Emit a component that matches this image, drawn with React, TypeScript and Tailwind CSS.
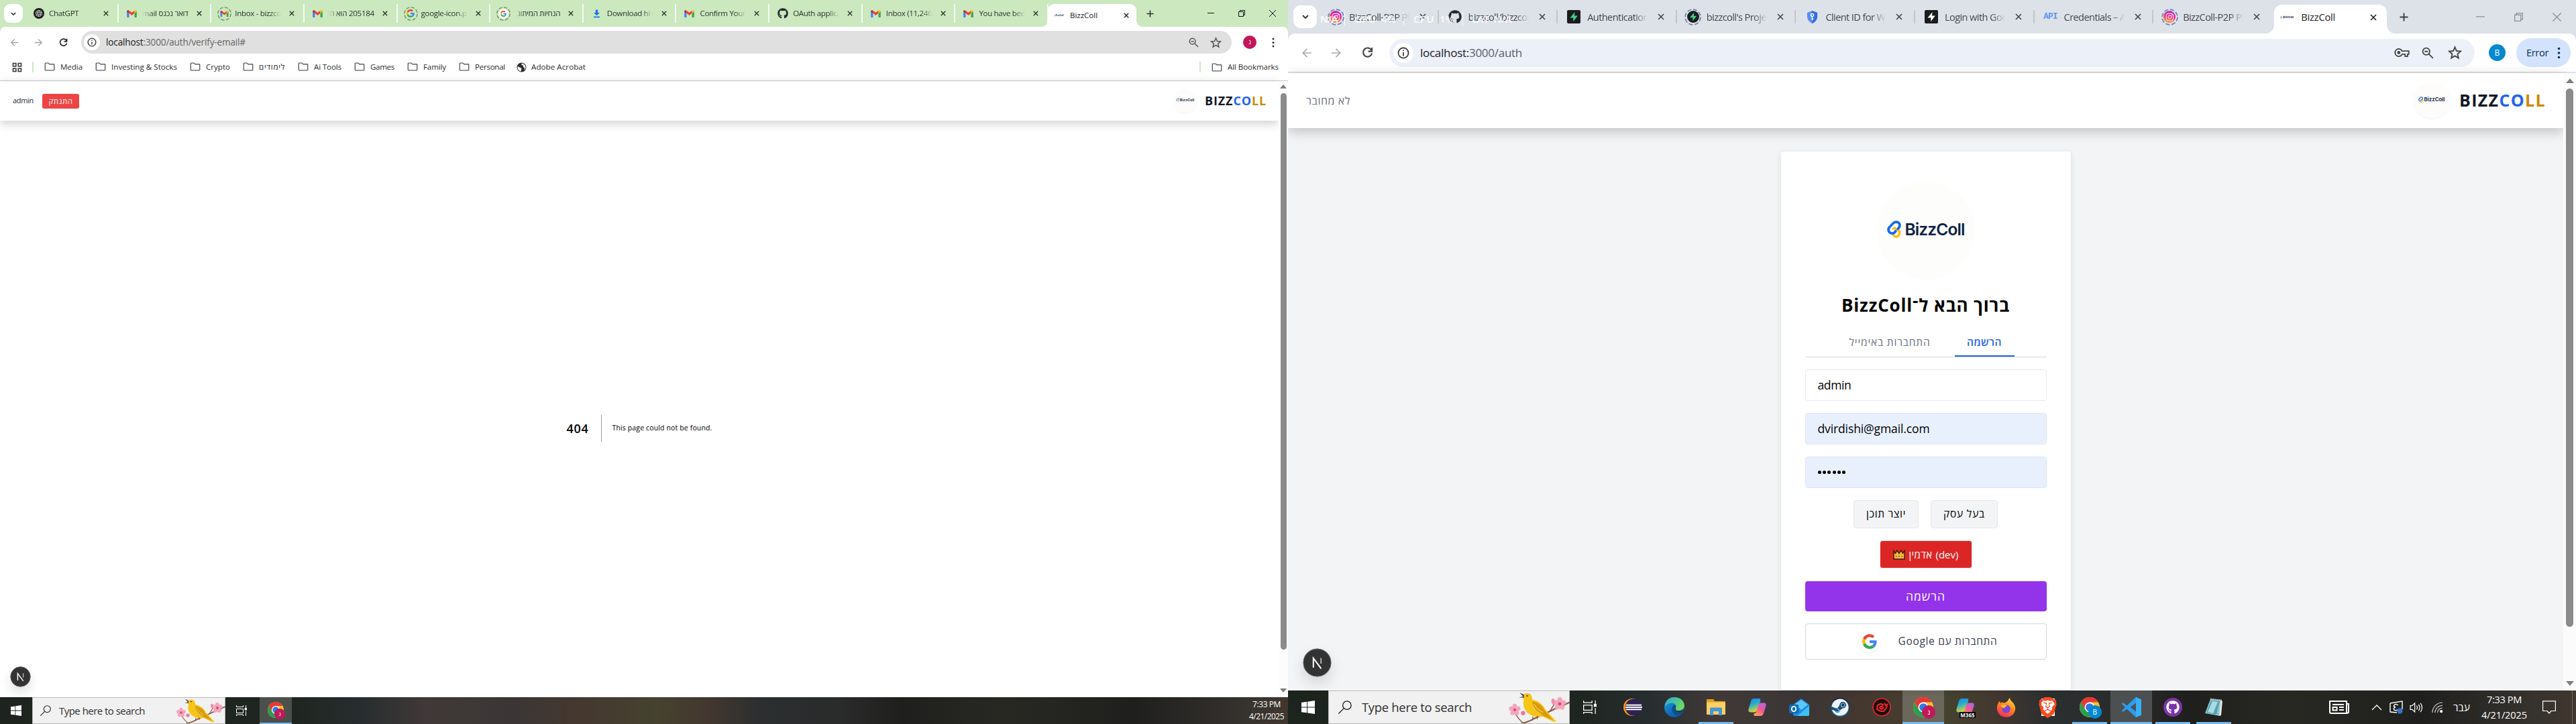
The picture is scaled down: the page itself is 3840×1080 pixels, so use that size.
import React, { useLayoutEffect, useRef, useState } from "react";
import { RiOpenaiFill } from "react-icons/ri";
import { FaGithub, FaSteam, FaInstagram } from "react-icons/fa";
import { SiBrave } from "react-icons/si";

/* Text whose letter spacing is adjusted so that it occupies exactly `w` pixels. */
function Fit({ w, children, className = "" }: { w: number; children: React.ReactNode; className?: string }) {
  const ref = useRef<HTMLSpanElement>(null);
  const [ls, setLs] = useState(0);
  useLayoutEffect(() => {
    const el = ref.current;
    if (!el) return;
    el.style.letterSpacing = "0px";
    const n = (el.textContent || "").length || 1;
    const v = (w - el.getBoundingClientRect().width) / n;
    el.style.letterSpacing = v + "px";
    setLs(v);
  }, [w]);
  return (
    <span ref={ref} className={"inline-block whitespace-nowrap " + className} style={{ letterSpacing: ls + "px" }}>
      {children}
    </span>
  );
}

/* ---------- small icons ---------- */
type P = { className?: string };

const X = ({ className = "" }: P) => (
  <svg viewBox="0 0 10 10" className={className} fill="none" stroke="currentColor" strokeWidth="1.7">
    <path d="M1 1L9 9M9 1L1 9" />
  </svg>
);
const Plus = ({ className = "" }: P) => (
  <svg viewBox="0 0 12 12" className={className} fill="none" stroke="currentColor" strokeWidth="1.7">
    <path d="M6 0.5V11.5M0.5 6H11.5" />
  </svg>
);
const Back = ({ className = "" }: P) => (
  <svg viewBox="0 0 16 16" className={className} fill="none" stroke="currentColor" strokeWidth="1.7">
    <path d="M15 8H2.5M8.5 1.8L2.3 8L8.5 14.2" />
  </svg>
);
const Reload = ({ className = "" }: P) => (
  <svg viewBox="0 0 16 16" className={className} fill="none" stroke="currentColor" strokeWidth="2">
    <path d="M13.6 4.6A6.2 6.2 0 1 0 14.2 9" />
    <path d="M14.2 1V6.2H9" />
  </svg>
);
const Info = ({ className = "" }: P) => (
  <svg viewBox="0 0 16 16" className={className} fill="none" stroke="currentColor" strokeWidth="1.5">
    <circle cx="8" cy="8" r="6.7" />
    <path d="M8 7V12M8 4V5.6" />
  </svg>
);
const ZoomOut = ({ className = "" }: P) => (
  <svg viewBox="0 0 16 16" className={className} fill="none" stroke="currentColor" strokeWidth="1.6">
    <circle cx="6" cy="6" r="4.6" />
    <path d="M9.4 9.4L15 15M3.8 6H8.2" />
  </svg>
);
const Star = ({ className = "" }: P) => (
  <svg viewBox="0 0 18 18" className={className} fill="none" stroke="currentColor" strokeWidth="1.6">
    <path d="M9 2L11.1 6.9L16.4 7.3L12.4 10.8L13.6 16L9 13.2L4.4 16L5.6 10.8L1.6 7.3L6.9 6.9Z" />
  </svg>
);
const Key = ({ className = "" }: P) => (
  <svg viewBox="0 0 24 14" className={className} fill="none" stroke="currentColor" strokeWidth="2">
    <path d="M12.4 4.5H23V9.5H21V13H17V9.5H12.4A6 6 0 1 1 12.4 4.5Z" />
    <circle cx="7" cy="7" r="1.6" fill="currentColor" />
  </svg>
);
const Dots = ({ className = "" }: P) => (
  <svg viewBox="0 0 4 16" className={className} fill="currentColor">
    <circle cx="2" cy="2.2" r="1.6" />
    <circle cx="2" cy="8" r="1.6" />
    <circle cx="2" cy="13.8" r="1.6" />
  </svg>
);
const Chevron = ({ className = "" }: P) => (
  <svg viewBox="0 0 10 6" className={className} fill="none" stroke="currentColor" strokeWidth="1.8">
    <path d="M1 1L5 5L9 1" />
  </svg>
);
const Folder = ({ className = "" }: P) => (
  <svg viewBox="0 0 16 14" className={className} fill="none" stroke="#5b5e61" strokeWidth="1.5">
    <path d="M1.6 1.2H6L7.8 3H14.4Q15.2 3 15.2 3.8V12Q15.2 12.8 14.4 12.8H1.6Q0.8 12.8 0.8 12V2Q0.8 1.2 1.6 1.2Z" />
  </svg>
);
const Apps = ({ className = "" }: P) => (
  <svg viewBox="0 0 16 16" className={className} fill="none" stroke="#3c4043" strokeWidth="1.8">
    <rect x="1.6" y="1.6" width="4.6" height="4.6" />
    <rect x="9.8" y="1.6" width="4.6" height="4.6" />
    <rect x="1.6" y="9.8" width="4.6" height="4.6" />
    <rect x="9.8" y="9.8" width="4.6" height="4.6" />
  </svg>
);
const Globe = ({ className = "" }: P) => (
  <svg viewBox="0 0 16 16" className={className}>
    <circle cx="8" cy="8" r="7.4" fill="#2b2e31" />
    <path d="M2 6Q4 8 6.5 8.4L8 10.5L6.8 14.5Q3 13.5 1.8 9.5ZM8.5 1.6Q7 3.5 8.6 4.4L11 5L10.5 7.5L13 9L12 12.6Q15 10 14.4 6.4L12 2.8Z" fill="#fff" />
  </svg>
);
const Gmail = ({ className = "" }: P) => (
  <svg viewBox="0 0 16 12" className={className}>
    <path d="M0 1.5V11Q0 12 1 12H3.6V4Z" fill="#4285f4" />
    <path d="M16 1.5V11Q16 12 15 12H12.4V4Z" fill="#34a853" />
    <path d="M3.6 0.8L8 4.2L12.4 0.8V5.2L8 8.6L3.6 5.2Z" fill="#ea4335" />
    <path d="M0 1.8Q0.6 -0.6 3.6 0.8V5.4L0 2.8Z" fill="#c5221f" />
    <path d="M16 1.8Q15.4 -0.6 12.4 0.8V5.4L16 2.8Z" fill="#fbbc04" />
  </svg>
);
const GoogleG = ({ className = "" }: P) => (
  <svg viewBox="0 0 48 48" className={className}>
    <path fill="#EA4335" d="M24 9.5c3.54 0 6.71 1.22 9.21 3.6l6.85-6.85C35.9 2.38 30.47 0 24 0 14.62 0 6.51 5.38 2.56 13.22l7.98 6.19C12.43 13.72 17.74 9.5 24 9.5z" />
    <path fill="#4285F4" d="M46.98 24.55c0-1.57-.15-3.09-.38-4.55H24v9.02h12.94c-.58 2.96-2.26 5.48-4.78 7.18l7.73 6c4.51-4.18 7.09-10.36 7.09-17.65z" />
    <path fill="#FBBC05" d="M10.53 28.59c-.48-1.45-.76-2.99-.76-4.59s.27-3.14.76-4.59l-7.98-6.19C.92 16.46 0 20.12 0 24c0 3.88.92 7.54 2.56 10.78l7.97-6.19z" />
    <path fill="#34A853" d="M24 48c6.48 0 11.93-2.13 15.89-5.81l-7.73-6c-2.15 1.45-4.92 2.3-8.16 2.3-6.26 0-11.57-4.22-13.47-9.91l-7.98 6.19C6.51 42.62 14.62 48 24 48z" />
  </svg>
);
const Download = ({ className = "" }: P) => (
  <svg viewBox="0 0 12 16" className={className}>
    <path d="M4 0.5H8V6H11.5L6 11.5L0.5 6H4ZM0.5 13H11.5V15H0.5Z" fill="#1a73e8" />
  </svg>
);
const BoltShape = ({ color }: { color: string }) => (
  <path d="M11.5 3L4.5 11.5H9.3V17L15.8 8.5H11Z" fill={color} />
);
const BoltSquare = ({ className = "", color }: P & { color: string }) => (
  <svg viewBox="0 0 20 20" className={className}>
    <rect width="20" height="20" rx="2" fill="#1c1c1c" />
    <BoltShape color={color} />
  </svg>
);
const BoltCircle = ({ className = "" }: P) => (
  <svg viewBox="0 0 20 20" className={className}>
    <circle cx="10" cy="10" r="10" fill="#1c1c1c" />
    <BoltShape color="#3ecf8e" />
  </svg>
);
const Shield = ({ className = "" }: P) => (
  <svg viewBox="0 0 18 20" className={className}>
    <path d="M9 0L17 3V10Q16 17 9 20Q2 17 1 10V3Z" fill="#5b8def" />
    <path d="M9 0L17 3V10Q16 17 9 20Z" fill="#2f6fe0" />
    <circle cx="9" cy="6.8" r="2.2" fill="none" stroke="#fff" strokeWidth="1.5" />
    <path d="M9 9V15M9 13H11" stroke="#fff" strokeWidth="1.6" />
  </svg>
);
const Insta = ({ className = "" }: P) => (
  <span className={"flex items-center justify-center rounded-full bg-[linear-gradient(200deg,#a52bd6_5%,#f5278a_45%,#ff9a2e_90%)] text-white " + className}>
    <FaInstagram className="h-[13px] w-[13px]" />
  </span>
);
const Ring = ({ children, className = "", color }: { children: React.ReactNode; className?: string; color: string }) => (
  <span className={"relative flex items-center justify-center " + className}>
    <svg viewBox="0 0 24 24" className="absolute inset-0 h-full w-full" fill="none" stroke={color} strokeWidth="1.6">
      <circle cx="12" cy="12" r="11" strokeDasharray="6 2.64" />
    </svg>
    {children}
  </span>
);
const LinkMark = ({ className = "" }: P) => (
  <svg viewBox="0 0 62 78" className={className} fill="none" strokeLinecap="round" strokeWidth="11">
    <path d="M28 36C33 32 40 34 40 41C53 41 58 50 54 61C49 74 36 76 28 65" stroke="#fcc21b" />
    <path d="M38 47C33 58 18 62 9 51C3 42 6 34 11 29L27 12C38 2 54 6 56 19C57 27 53 33 48 37" stroke="#1268f5" />
  </svg>
);

const LogoTiny = ({ className = "", mark, text }: { className?: string; mark: string; text: string }) => (
  <span className={"flex items-center justify-center gap-px rounded-full bg-[#fdfcfb] " + className}>
    <LinkMark className={mark} />
    <span className={"font-bold text-[#1b2f4e] font-[Inter] " + text}>BizzColl</span>
  </span>
);

const NextBadge = ({ className = "" }: P) => (
  <svg viewBox="0 0 40 40" className={"absolute " + className}>
    <circle cx="20" cy="20" r="19.2" fill="#333" stroke="#6b6b6b" strokeWidth="1" />
    <path d="M14.7 27V13.7L25.5 28.2" fill="none" stroke="#fff" strokeWidth="1.9" />
    <path d="M25.3 13.5V21.5" stroke="#bbb" strokeWidth="1.7" />
  </svg>
);

/* ---------- tabs ---------- */
type TabInfo = { icon: React.ReactNode; label: string; rtl?: boolean };

const ringL = "h-[21px] w-[21px]";
const green = "#6f8a66";
const leftTabs: TabInfo[] = [
  { icon: <span className="flex h-4 w-4 items-center justify-center rounded-full bg-[#1f1f1f] text-white"><RiOpenaiFill className="h-3 w-3" /></span>, label: "ChatGPT" },
  { icon: <Gmail className="h-[11px] w-[15px]" />, label: "דואר נכנס Gmail", rtl: true },
  { icon: <Ring color={green} className={ringL}><Gmail className="h-[9px] w-[13px]" /></Ring>, label: "Inbox - bizzcoll" },
  { icon: <Gmail className="h-[11px] w-[15px]" />, label: "205184 הוא הקוד", rtl: true },
  { icon: <Ring color={green} className={ringL}><GoogleG className="h-[12px] w-[12px]" /></Ring>, label: "google-icon.png" },
  { icon: <Ring color={green} className={ringL}><span className="flex h-[15px] w-[15px] items-center justify-center rounded-full bg-white/80"><GoogleG className="h-[9px] w-[9px]" /></span></Ring>, label: "הנחיות המיתוג", rtl: true },
  { icon: <Download className="h-[13px] w-[11px]" />, label: "Download hi res" },
  { icon: <Gmail className="h-[11px] w-[15px]" />, label: "Confirm Your Si" },
  { icon: <FaGithub className="h-[16px] w-[16px] text-[#24292f]" />, label: "OAuth application" },
  { icon: <Gmail className="h-[11px] w-[15px]" />, label: "Inbox (11,246)" },
  { icon: <Gmail className="h-[11px] w-[15px]" />, label: "You have been" },
];

const ringR = "h-[25px] w-[25px]";
const blue = "#6580ad";
const rightTabs: TabInfo[] = [
  { icon: <Ring color={blue} className={ringR}><Insta className="h-[18px] w-[18px]" /></Ring>, label: "BizzColl-P2P Pl" },
  { icon: <FaGithub className="h-5 w-5 text-[#24292f]" />, label: "bizzcoll/bizzcoll" },
  { icon: <BoltSquare className="h-5 w-5" color="#3ecf8e" />, label: "Authentication" },
  { icon: <Ring color={blue} className={ringR}><BoltCircle className="h-[18px] w-[18px]" /></Ring>, label: "bizzcoll's Project" },
  { icon: <Shield className="h-[19px] w-[17px]" />, label: "Client ID for Web" },
  { icon: <BoltSquare className="h-5 w-5" color="#fff" />, label: "Login with Goog" },
  { icon: <span className="font-['Liberation_Mono'] text-[12.5px] font-bold tracking-[-0.6px] text-[#5f94f5]">API</span>, label: "Credentials – A" },
  { icon: <Ring color={blue} className={ringR}><Insta className="h-[18px] w-[18px]" /></Ring>, label: "BizzColl-P2P Pl" },
];

function LeftTab({ t }: { t: TabInfo }) {
  return (
    <div className="flex h-7 w-[138.65px] shrink-0 items-center border-r-2 border-white/80 text-[#2c332a]">
      <span className="flex w-[35px] shrink-0 items-center justify-center pl-1">{t.icon}</span>
      {t.rtl ? (
        <span dir="rtl" className="h-5 w-[69px] overflow-hidden text-[11.6px] leading-5 tracking-[-0.3px] whitespace-nowrap [mask-image:linear-gradient(to_left,black_76%,transparent)]">{t.label}</span>
      ) : (
        <span className="h-5 w-[69px] overflow-hidden text-[11.6px] leading-5 tracking-[-0.35px] whitespace-nowrap [mask-image:linear-gradient(to_right,black_76%,transparent)]">{t.label}</span>
      )}
      <X className="ml-[12px] h-[8px] w-[8px]" />
    </div>
  );
}

function RightTab({ t }: { t: TabInfo }) {
  return (
    <div className="flex h-[36px] w-[177.6px] shrink-0 items-center text-[#44484c]">
      <span className="flex w-[44px] shrink-0 items-center justify-center pl-1">{t.icon}</span>
      <span className="h-6 w-[90px] overflow-hidden text-[14.6px] leading-6 tracking-[-0.6px] whitespace-nowrap [mask-image:linear-gradient(to_right,black_78%,transparent)]">{t.label}</span>
      <X className="ml-[15px] h-[10px] w-[10px]" />
      <span className="ml-auto h-5 w-[2px] bg-[#c3c6c9]" />
    </div>
  );
}

const WinBtns = ({ size, cell, first }: { size: string; cell: string; first: string }) => (
  <>
    <span className={"flex justify-center " + first}>
      <svg viewBox="0 0 10 10" className={size} stroke="currentColor" fill="none"><path d="M0 4.5H10" /></svg>
    </span>
    <span className={"flex justify-center " + cell}>
      <svg viewBox="0 0 10 10" className={size} stroke="currentColor" fill="none"><path d="M0.5 2.5H7.5V9.5H0.5ZM2.5 2.5V0.5H9.5V7.5H7.5" /></svg>
    </span>
    <span className={"flex justify-center " + cell}>
      <svg viewBox="0 0 10 10" className={size} stroke="currentColor" fill="none"><path d="M0 0L10 10M10 0L0 10" /></svg>
    </span>
  </>
);

const Feet = ({ left, right }: { left: string; right: string }) => (
  <>
    <span className={"absolute bottom-0 " + left} />
    <span className={"absolute bottom-0 " + right} />
  </>
);

const Brand = ({ w, className }: { w: number; className: string }) => (
  <Fit w={w} className={"font-bold " + className}>
    <span className="text-[#111827]">BIZZ</span>
    <span className="text-[#2563eb]">CO</span>
    <span className="text-[#ca8a04]">LL</span>
  </Fit>
);

const bookmarks: [string, number][] = [
  ["Media", 33], ["Investing & Stocks", 98], ["Crypto", 36], ["לימודים", 39], ["Ai Tools", 41], ["Games", 36], ["Family", 34], ["Personal", 45],
];

/* ---------- left monitor ---------- */
function LeftScreen() {
  return (
    <div className="flex h-[1080px] w-[1920px] shrink-0 flex-col overflow-hidden bg-white">
      <div className="flex h-10 shrink-0 items-center bg-[#cbe8bf] pl-[6px]">
        <span className="flex h-7 w-7 items-center justify-center rounded-[9px] bg-white">
          <Chevron className="h-[5px] w-[8px] text-[#222]" />
        </span>
        <div className="ml-[4px] flex">
          {leftTabs.map((t, i) => <LeftTab key={i} t={t} />)}
        </div>
        <div className="relative -ml-[1px] mt-[6px] flex h-[34px] w-[132px] items-center rounded-t-[9px] bg-white pl-[8px]">
          <Feet left="-left-[9px] h-[9px] w-[9px] bg-[radial-gradient(circle_at_0_0,transparent_8.5px,white_9px)]" right="-right-[9px] h-[9px] w-[9px] bg-[radial-gradient(circle_at_100%_0,transparent_8.5px,white_9px)]" />
          <LogoTiny className="h-4 w-4" mark="h-[3px] w-[2px]" text="text-[3px]" />
          <span className="ml-[9px] w-[76px] text-[11.6px] leading-5 text-[#222]"><Fit w={41}>BizzColl</Fit></span>
          <X className="ml-[4px] h-[8px] w-[8px] text-[#222]" />
        </div>
        <Plus className="ml-[15px] h-[11px] w-[11px] text-[#2c332a]" />
        <div className="ml-auto flex items-center text-[#111]">
          <WinBtns size="h-[10px] w-[10px]" first="w-[46px]" cell="w-[46px]" />
        </div>
      </div>
      <div className="shrink-0 bg-[#cbe8bf]">
        <div className="flex h-10 items-center rounded-t-lg bg-white [&>*]:mt-[6px]">
          <Back className="ml-[15px] h-[13px] w-[13px] text-[#a5a8a5]" />
          <Back className="ml-[23px] h-[13px] w-[13px] rotate-180 text-[#a5a8a5]" />
          <Reload className="ml-[24px] h-[13px] w-[13px] text-[#222]" />
          <div className="ml-[20px] flex h-[34px] w-[1715px] items-center rounded-full bg-[#e0e0e0]">
            <span className="ml-[4px] flex h-6 w-6 items-center justify-center rounded-full bg-white"><Info className="h-[14px] w-[14px] text-[#333]" /></span>
            <Fit w={208} className="ml-[9px] text-[13.6px] text-[#666]"><span className="text-[#1a1a1a]">localhost</span>:3000/auth/verify-email#</Fit>
            <ZoomOut className="mr-[17px] ml-auto h-[15px] w-[15px] text-[#555]" />
            <Star className="mr-[15px] h-[17px] w-[17px] text-[#555]" />
          </div>
          <span className="ml-[17px] flex h-5 w-5 items-center justify-center rounded-full bg-[#c2185b] text-[9px] text-white">נ</span>
          <Dots className="ml-[23px] h-[15px] w-[4px] text-[#333]" />
        </div>
      </div>
      <div className="flex h-[41px] shrink-0 items-center border-b border-[#c9c9c9] text-[11.6px] text-[#2b2b2b]">
        <Apps className="ml-[18px] h-[15px] w-[15px]" />
        <span className="ml-[15px] h-4 w-[2px] bg-[#cbe8bf]" />
        <div className="ml-[16px] flex">
          {bookmarks.map(([b, w]) => (
            <span key={b} className="mr-[19px] flex items-center">
              <Folder className="mr-[8px] h-[13px] w-[16px]" />
              <Fit w={w}>{b}</Fit>
            </span>
          ))}
        </div>
        <Globe className="-ml-[2px] h-[15px] w-[15px]" />
        <Fit w={81} className="ml-[7px]">Adobe Acrobat</Fit>
        <span className="ml-auto h-4 w-[2px] bg-[#cbe8bf]" />
        <Folder className="mr-[8px] ml-[16px] h-[13px] w-[16px]" />
        <Fit w={76} className="mr-[14px]">All Bookmarks</Fit>
      </div>
      <div className="relative flex min-h-0 flex-1 bg-white">
        <div className="flex flex-1 flex-col">
          <div className="flex h-[59px] shrink-0 items-center bg-white shadow-[0_4px_14px_rgba(0,0,0,0.2)]">
            <Fit w={31} className="ml-[19px] text-[11px] font-medium text-[#1f2937]">admin</Fit>
            <span className="ml-[13px] flex h-[22px] w-[55px] items-center justify-center rounded-[3px] bg-[#ef4444] text-[11.5px] text-white"><Fit w={36}>התנתק</Fit></span>
            <LogoTiny className="ml-auto h-[37px] w-[37px] pb-[3px] shadow-[0_1px_1px_rgba(0,0,0,0.05)]" mark="h-[6px] w-[5px]" text="text-[5.4px]" />
            <Brand w={92} className="mr-[18px] ml-[11px] text-[18px]" />
          </div>
          <div className="flex flex-1 items-center justify-center pt-[58px]">
            <Fit w={33} className="text-[18px] font-semibold text-black">404</Fit>
            <span className="mr-[16px] ml-[18px] h-10 w-px bg-[#999]" />
            <Fit w={149} className="text-[10.5px] text-black">This page could not be found.</Fit>
          </div>
        </div>
        <div className="flex w-[14px] flex-col items-center bg-[#fcfcfc]">
          <span className="mt-[5px] border-x-[5px] border-b-[6px] border-x-transparent border-b-[#7d7d7d]" />
          <span className="mt-[7px] h-[830px] w-[9px] rounded-full bg-[#8b8b8b]" />
          <span className="mt-auto mb-[7px] border-x-[5px] border-t-[6px] border-x-transparent border-t-[#7d7d7d]" />
        </div>
        <NextBadge className="bottom-[15px] left-[15px] h-[31px] w-[31px] rounded-full shadow-[0_8px_16px_rgba(0,0,0,0.12)]" />
      </div>
      <div className={"flex h-10 shrink-0 items-center " + wallpaper}>
        <span className="flex w-12 justify-center"><WinLogo className="h-4 w-4" /></span>
        <div className="flex h-10 w-72 items-center border border-[#b9b9b9] bg-[#f1f1f1]">
          <Search className="ml-[11px] h-4 w-4" />
          <Fit w={128} className="ml-[12px] text-[15px] text-[#303030]">Type here to search</Fit>
          <Bird className="-mr-px ml-auto h-[38px] w-[74px]" />
        </div>
        <span className="flex w-[51px] pl-4"><TaskView className="h-4 w-4" /></span>
        <span className="flex h-10 w-12 items-center justify-center border-b-2 border-[#76b9ed] bg-[#4b504b]">
          <span className="relative">
            <Chrome className="h-6 w-6" />
            <span className="absolute -right-[2px] -bottom-[2px] flex h-4 w-4 items-center justify-center rounded-full bg-[#c2185b] text-[8px] text-white">נ</span>
          </span>
        </span>
        <div className="mr-[6px] ml-auto flex w-[52px] flex-col items-center text-[12px] leading-[18px] text-white">
          <Fit w={42}>7:33 PM</Fit>
          <Fit w={52}>4/21/2025</Fit>
        </div>
      </div>
    </div>
  );
}

/* ---------- taskbar drawings ---------- */
const wallpaper =
  "bg-[linear-gradient(90deg,#1d231d_0%,#1f2621_23%,#272d2e_28%,#403938_33%,#3b3635_40%,#45382f_45%,#45422f_51%,#43372f_55%,#2b2f30_59%,#2a2b2b_65%,#1f1f1d_70%,#282823_78%,#1f1f1d_88%,#34312d_96%,#40372f_100%)]";

const WinLogo = ({ className = "" }: P) => (
  <svg viewBox="0 0 16 16" className={className} fill="#fff">
    <path d="M0 2.3L6.5 1.4V7.6H0ZM7.3 1.3L16 0V7.6H7.3ZM0 8.4H6.5V14.6L0 13.7ZM7.3 8.4H16V16L7.3 14.7Z" />
  </svg>
);
const Search = ({ className = "" }: P) => (
  <svg viewBox="0 0 16 16" className={className} fill="none" stroke="#222" strokeWidth="1.1">
    <circle cx="10.3" cy="5.7" r="5" />
    <path d="M6.6 9.3L0.3 15.7" />
  </svg>
);
const TaskView = ({ className = "" }: P) => (
  <svg viewBox="0 0 16 16" className={className} fill="none" stroke="#fff" strokeWidth="1">
    <path d="M0.5 0V2.5H10.5V0M0.5 5.5H10.5V11.5H0.5ZM0.5 16V14H10.5V16M14.5 0V4M14.5 9V16" />
    <rect x="13.2" y="4.6" width="2.4" height="2.4" fill="#fff" />
  </svg>
);
const Flower = ({ x, y, s }: { x: number; y: number; s: number }) => (
  <g transform={`translate(${x} ${y}) scale(${s})`}>
    {[0, 72, 144, 216, 288].map((a) => (
      <ellipse key={a} cx="0" cy="-4" rx="2.9" ry="3.6" fill="#f3a6bd" transform={`rotate(${a})`} />
    ))}
    <circle r="1.8" fill="#d9486f" />
  </g>
);
const Bird = ({ className = "" }: P) => (
  <svg viewBox="0 0 74 38" className={className} preserveAspectRatio="none">
    <path d="M16 38Q24 37 32 32Q46 26 56 21Q66 17 74 13" fill="none" stroke="#8a5a44" strokeWidth="1.8" />
    <path d="M18 38Q12 32 8 26M50 24Q54 18 56 14" fill="none" stroke="#8a5a44" strokeWidth="1.1" />
    <path d="M17 6Q20 1 26 3Q29 5 29 10Q40 12 45 22L58 36L54 36L42 30Q28 32 21 23Q17 17 19 10Z" fill="#f5c518" />
    <path d="M29 12Q40 14 44 23L54 34L40 28Q30 24 29 12Z" fill="#d99a0b" />
    <path d="M31 15Q35 22 42 25M30 18Q34 25 40 27" fill="none" stroke="#f9dc5c" strokeWidth="0.8" />
    <path d="M19 4L14 1.8L18 6.4L13 7.4L19 8Z" fill="#4b4b55" />
    <circle cx="23" cy="5.6" r="0.9" fill="#222" />
    <path d="M30 30L29 35M35 29L35 33" stroke="#8a5a44" />
    <Flower x={8} y={22} s={0.95} />
    <Flower x={62} y={15} s={1.05} />
    <circle cx="18" cy="26" r="2.6" fill="#e8799b" />
    <ellipse cx="54" cy="12" rx="2" ry="3.2" fill="#ee8fab" />
  </svg>
);
const Chrome = ({ className = "" }: P) => (
  <svg viewBox="0 0 24 24" className={className}>
    <circle cx="12" cy="12" r="12" fill="#fbc02d" />
    <path d="M12 12L1.6 6A12 12 0 0 1 22.4 6H12Z" fill="#e53935" />
    <path d="M1.6 6A12 12 0 0 0 12 24L17.2 15H6.8Z" fill="#2e9e4b" />
    <path d="M1.6 6L6.8 15L12 6Z" fill="#e53935" />
    <circle cx="12" cy="12" r="6" fill="#fff" />
    <circle cx="12" cy="12" r="4.7" fill="#2a7de9" />
  </svg>
);
const ChromeUser = ({ color, letter }: { color: string; letter: string }) => (
  <span className="relative">
    <Chrome className="h-[30px] w-[30px]" />
    <span className={"absolute -right-[3px] -bottom-[2px] flex h-5 w-5 items-center justify-center rounded-full text-[10px] text-white " + color}>{letter}</span>
  </span>
);
const Eclipse = () => (
  <svg viewBox="0 0 30 30" className="h-[28px] w-[30px]">
    <circle cx="14" cy="15" r="14" fill="#f7941e" />
    <circle cx="16.5" cy="15" r="13.5" fill="#2c2255" />
    <path d="M4 11.5H29M3.4 15H30M4 18.5H29" stroke="#fff" strokeWidth="2" />
  </svg>
);
const Edge = () => (
  <svg viewBox="0 0 30 30" className="h-[30px] w-[30px]">
    <defs>
      <linearGradient id="e1" x1="0" y1="0" x2="1" y2="0.6"><stop offset="0" stopColor="#2aa7e0" /><stop offset="1" stopColor="#6fdc5a" /></linearGradient>
      <linearGradient id="e2" x1="0" y1="0" x2="0.6" y2="1"><stop offset="0" stopColor="#1b9de2" /><stop offset="1" stopColor="#0c59a4" /></linearGradient>
    </defs>
    <circle cx="15" cy="15" r="15" fill="url(#e2)" />
    <path d="M1 11Q4 0 15 0Q29 1 30 13Q29 20 21 20Q16 20 17 16Q19 10 13 9Q5 8 1 14Z" fill="url(#e1)" />
    <path d="M17 16Q15 20 21 22Q26 22 28.5 20Q26 27 19 27Q9 24 12 14Q14 11 16 12Q18 14 17 16Z" fill="#0f4f94" />
    <path d="M17 16Q16 20 21 20.5Q27 21 29.6 17L28.6 21Q23 24 18 21Q15 18 17 16Z" fill="#3a352f" />
  </svg>
);
const Explorer = () => (
  <svg viewBox="0 0 28 24" className="h-[24px] w-[28px]">
    <path d="M0 1Q0 0 1 0H10L12 3H27Q28 3 28 4V10H0Z" fill="#e0a11b" />
    <rect y="4.5" width="28" height="18.5" rx="1" fill="#fdd063" />
    <path d="M5 24V14Q5 12.5 6.5 12.5H21.5Q23 12.5 23 14V24H18V18H10V24Z" fill="#4497d8" />
  </svg>
);
const Copilot = ({ label }: { label?: string }) => (
  <span className="relative">
    <svg viewBox="0 0 30 28" className="h-[26px] w-[29px]">
      <defs>
        <linearGradient id="c1" x1="0" y1="0" x2="0.3" y2="1"><stop offset="0" stopColor="#1f7ff0" /><stop offset="0.5" stopColor="#27b3c8" /><stop offset="1" stopColor="#d8cf3a" /></linearGradient>
        <linearGradient id="c2" x1="1" y1="0" x2="0.3" y2="1"><stop offset="0" stopColor="#9a6bf5" /><stop offset="0.5" stopColor="#f0569a" /><stop offset="1" stopColor="#ff9a5a" /></linearGradient>
      </defs>
      <path d="M9 0H18Q21 0 20 4L15 18Q14 22 10 22H4Q0 22 1 17L5 4Q6 0 9 0Z" fill="url(#c1)" />
      <path d="M19 7H26Q30 7 29 12L25 24Q24 28 20 28H12Q8 28 10 24Q13 24 14 20L17 10Q18 7 19 7Z" fill="url(#c2)" />
    </svg>
    {label && <span className="absolute -right-[1px] -bottom-[3px] bg-black px-px text-[8px] leading-[9px] font-bold text-white">{label}</span>}
  </span>
);
const Outlook = () => (
  <svg viewBox="0 0 30 26" className="h-[26px] w-[30px]">
    <path d="M6 9L18 0L30 9V24Q30 26 28 26H8Q6 26 6 24Z" fill="#1f8ae0" />
    <path d="M9 8L18 2L28 9L18 17Z" fill="#5cc9f5" />
    <path d="M12 26L30 11V24Q30 26 28 26Z" fill="#3fc0f2" />
    <rect y="9" width="14" height="13" rx="1.5" fill="#0f6cbd" />
    <ellipse cx="7" cy="15.5" rx="3.2" ry="3.6" fill="none" stroke="#fff" strokeWidth="1.9" />
  </svg>
);
const RedG = () => (
  <svg viewBox="0 0 28 28" className="h-[28px] w-[28px]">
    <circle cx="14" cy="14" r="13" fill="#1a0d0d" stroke="#e3272b" strokeWidth="1.7" />
    <path d="M18 8L20 11L22 10L21 15L17 20L12 20L7 17L8 11L12 9L16 10L15 13H12L11 15L14 17L17 14" fill="none" stroke="#e3272b" strokeWidth="2.2" />
  </svg>
);
const Firefox = () => (
  <svg viewBox="0 0 30 30" className="h-[29px] w-[29px]">
    <defs>
      <linearGradient id="f1" x1="0.8" y1="0" x2="0.3" y2="1"><stop offset="0" stopColor="#ffe14a" /><stop offset="0.45" stopColor="#ff8a1e" /><stop offset="1" stopColor="#ee2a5a" /></linearGradient>
    </defs>
    <path d="M20 0Q22 5 26 8Q30 13 29 19Q26 30 15 30Q3 29 1 18Q0 10 5 5L6 8Q9 6 12 8Q18 6 20 0Z" fill="url(#f1)" />
    <circle cx="15" cy="17" r="6.5" fill="#7b45d6" />
    <path d="M7 12Q11 9 17 12Q13 14 12 16Q9 16 7 12Z" fill="#ffb52e" />
  </svg>
);
const VSCode = () => (
  <svg viewBox="0 0 30 30" className="h-[30px] w-[30px]">
    <path d="M22 0L30 3.5V26.5L22 30L8.500 17.5L3 21.8L0.500 20.5L6 15L0.500 9.500L3 8.200L8.500 12.500ZM22 8.500L13.500 15L22 21.500Z" fill="#2a9df0" fillRule="evenodd" />
    <path d="M22 0L30 3.5V26.5L22 30Z" fill="#37b0f7" />
  </svg>
);
const Notepad = () => (
  <svg viewBox="0 0 28 28" className="h-[28px] w-[28px]">
    <path d="M9 2L26 4L23 27L1 23Z" fill="#8fc3cf" />
    <path d="M10 4L23 5L18 25L3 22Z" fill="#58a3b5" />
    <path d="M12 5L20 6L13 23L5 21Z" fill="#a9dbe4" />
    <path d="M24 4L27 5L25 26L22 27Z" fill="#e8e4da" />
    <path d="M9 1.5L26 3.5" stroke="#ddd" strokeWidth="1.6" strokeDasharray="2 1" />
  </svg>
);

const running = "border-b-[3px] border-[#76b9ed] pt-[3px]";
const apps: { node: React.ReactNode; run?: boolean; active?: string }[] = [
  { node: <Eclipse /> },
  { node: <Edge /> },
  { node: <Explorer />, run: true },
  { node: <Copilot /> },
  { node: <Outlook /> },
  { node: <span className="flex h-[28px] w-[28px] items-center justify-center rounded-full bg-[linear-gradient(180deg,#10203f,#1477b8)]"><FaSteam className="h-[26px] w-[26px] text-[#eef3f7]" /></span> },
  { node: <RedG /> },
  { node: <ChromeUser color="bg-[#c2185b]" letter="נ" />, active: "bg-[#6c675b]" },
  { node: <Copilot label="M365" /> },
  { node: <Firefox /> },
  { node: <span className="flex h-[26px] w-[20px] items-center justify-center bg-white"><SiBrave className="h-[31px] w-[31px] shrink-0 text-[#fb4a1e]" /></span> },
  { node: <ChromeUser color="bg-[#0288d1]" letter="B" />, run: true },
  { node: <VSCode />, active: "bg-[#4d5051]" },
  { node: <span className="flex h-[28px] w-[28px] items-center justify-center rounded-full bg-[#7b35a8]"><FaGithub className="h-[20px] w-[20px] text-white" /></span>, run: true },
  { node: <Notepad />, run: true },
];

function RightTaskbar() {
  return (
    <div className={"flex h-[50px] shrink-0 items-center " + wallpaper}>
      <span className="flex w-[60px] justify-center"><WinLogo className="h-5 w-5" /></span>
      <div className="flex h-[50px] w-[360px] items-center border border-[#b9b9b9] bg-[#f1f1f1]">
        <Search className="ml-[14px] h-5 w-5" />
        <Fit w={164} className="ml-[15px] text-[18.5px] text-[#303030]">Type here to search</Fit>
        <Bird className="-mr-px ml-auto h-[48px] w-[92px]" />
      </div>
      <span className="flex w-[63px] justify-center pr-1"><TaskView className="h-5 w-5" /></span>
      {apps.map((a, i) => (
        <span key={i} className={"flex h-[50px] w-[61.9px] justify-center " + (a.active ?? "")}>
          <span className={"flex h-full items-center justify-center " + (a.active ? "w-full " : "w-[52px] ") + (a.run || a.active ? running : "")}>{a.node}</span>
        </span>
      ))}
      <div className="ml-auto flex items-center text-white">
        <svg viewBox="0 0 30 20" className="h-[20px] w-[30px]" fill="none" stroke="#fff" strokeWidth="2">
          <path d="M1 1H26V19H3Q1 19 1 17ZM26 5H29V17Q29 19 26 19M5 6H22M15 10H22M15 14H22" />
          <rect x="5.5" y="10" width="6" height="4.5" />
        </svg>
        <svg viewBox="0 0 16 9" className="ml-[33px] h-[9px] w-[16px]" fill="none" stroke="#fff" strokeWidth="1.3"><path d="M1 8L8 1L15 8" /></svg>
        <svg viewBox="0 0 22 20" className="ml-[10px] h-[20px] w-[22px]" fill="none" stroke="#fff" strokeWidth="1.4">
          <path d="M2 4L20 1V13M2 4V17L12 18" />
          <path d="M14 7Q10 4 8 7Q6 9 10 10Q6 11 8 14Q11 16 14 13" />
          <circle cx="16.5" cy="15.5" r="4.2" fill="#2f74c8" stroke="none" />
        </svg>
        <svg viewBox="0 0 22 18" className="ml-[9px] h-[17px] w-[21px]" fill="none" stroke="#fff" strokeWidth="1.3">
          <path d="M1 6H4L8 2V16L4 12H1ZM11 6Q13 9 11 12M14 4Q17.5 9 14 14M17 2Q22 9 17 16" />
        </svg>
        <svg viewBox="0 0 18 18" className="ml-[12px] h-[17px] w-[17px]" fill="none" stroke="#fff" strokeWidth="1.2">
          <path d="M1 17A16 16 0 0 1 17 1M5 17A12 12 0 0 1 17 5.5M9 17A8 8 0 0 1 17 9.5" opacity="0.8" />
          <circle cx="15" cy="15" r="1.6" fill="#fff" />
        </svg>
        <Fit w={25} className="ml-[15px] text-[15px]">עבר</Fit>
        <div className="ml-[17px] flex w-[68px] flex-col items-center text-[14.6px] leading-[23px]">
          <Fit w={52}>7:33 PM</Fit>
          <Fit w={68}>4/21/2025</Fit>
        </div>
        <svg viewBox="0 0 20 20" className="ml-[23px] h-[20px] w-[20px]" fill="none" stroke="#fff" strokeWidth="1.2"><path d="M0.6 0.8H19.4V15.5H13L10 19L7 15.5H0.6Z" /></svg>
        <span className="mr-[5px] ml-[24px] h-[50px] w-px bg-[#6d6862]" />
      </div>
    </div>
  );
}

const Crown = ({ className = "" }: P) => (
  <svg viewBox="0 0 18 15" className={className}>
    <path d="M1 1.5L3.6 5.5L5.8 1L9 5.5L12.2 1L14.4 5.5L17 1.5V14H1Z" fill="#fdb92e" stroke="#3a1d0c" strokeWidth="1.4" />
    <circle cx="9" cy="9.8" r="1.3" fill="#1ea7c9" />
    <circle cx="4.8" cy="10" r="1" fill="#d8337c" />
    <circle cx="13.2" cy="10" r="1" fill="#d8337c" />
  </svg>
);

/* ---------- right monitor ---------- */
function RightScreen() {
  return (
    <div className="flex h-[1080px] w-[1920px] shrink-0 flex-col overflow-hidden bg-[#f3f4f6]">
      <div className="relative flex h-[50px] shrink-0 items-center bg-[#dde1e8] pl-[8px]">
        <span className="flex h-[34px] w-[35px] items-center justify-center rounded-[11px] bg-white">
          <Chevron className="h-[6px] w-[10px] text-[#333]" />
        </span>
        <div className="ml-[4px] flex">
          {rightTabs.map((t, i) => (
            <div key={i} className={i === 7 ? "w-[174px] overflow-hidden" : ""}><RightTab t={t} /></div>
          ))}
        </div>
        <div className="relative mt-[7px] ml-[6px] flex h-[43px] w-[168px] items-center rounded-t-[12px] bg-white pb-[5px] pl-[9px]">
          <Feet left="-left-[12px] h-[12px] w-[12px] bg-[radial-gradient(circle_at_0_0,transparent_11.5px,white_12px)]" right="-right-[12px] h-[12px] w-[12px] bg-[radial-gradient(circle_at_100%_0,transparent_11.5px,white_12px)]" />
          <LogoTiny className="h-5 w-5" mark="h-[4px] w-[3px]" text="text-[4px]" />
          <span className="ml-[11px] w-[98px] text-[14.6px] text-[#222]"><Fit w={51}>BizzColl</Fit></span>
          <X className="ml-[5px] h-[10px] w-[10px] text-[#222]" />
        </div>
        <Plus className="ml-[19px] h-[13px] w-[13px] text-[#3a3d40]" />
        <div className="ml-auto flex items-center text-[#8f9296]">
          <WinBtns size="h-[13px] w-[13px]" first="w-[57px]" cell="w-[57px]" />
        </div>
        <div className="absolute top-[17px] left-[48px] flex items-center text-[15px] leading-[22px] font-semibold text-white/90">
          <Fit w={26}>N/A</Fit>
          <span className="mr-[14px] ml-[10px] h-5 w-px bg-white/80" />
          <Fit w={62}>GPU&nbsp; 4%</Fit>
          <span className="mr-[14px] ml-[11px] h-5 w-px bg-white/80" />
          <Fit w={61}>CPU&nbsp; 1%</Fit>
          <span className="mr-[13px] ml-[12px] h-5 w-px bg-white/80" />
          <Fit w={59}>LAT&nbsp; N/A</Fit>
        </div>
      </div>
      <div className="shrink-0 bg-[#dde1e8]">
        <div className="flex h-[59px] items-center rounded-t-[10px] border-b-2 border-[#dfdfdf] bg-white">
          <Back className="ml-[20px] h-[16px] w-[16px] text-[#a8abad]" />
          <Back className="ml-[28px] h-[16px] w-[16px] rotate-180 text-[#a8abad]" />
          <Reload className="ml-[30px] h-[17px] w-[17px] text-[#444]" />
          <div className="ml-[24px] flex h-[42px] w-[1618px] items-center rounded-full bg-[#ebf0f9]">
            <span className="ml-[6px] flex h-[30px] w-[30px] items-center justify-center rounded-full bg-white"><Info className="h-[18px] w-[18px] text-[#333]" /></span>
            <Fit w={152} className="ml-[10px] text-[17px] text-[#5a5e63]"><span className="text-[#1a1a1a]">localhost:</span>3000/auth</Fit>
            <Key className="mr-[18px] ml-auto h-[13px] w-[23px] text-[#444]" />
            <ZoomOut className="mr-[21px] h-[18px] w-[18px] text-[#444]" />
            <Star className="mr-[19px] h-[21px] w-[21px] text-[#444]" />
          </div>
          <span className="ml-[21px] flex h-[25px] w-[25px] items-center justify-center rounded-full bg-[#0288d1] text-[12px] text-white">B</span>
          <span className="ml-[16px] flex h-[43px] w-[81px] items-center rounded-full bg-[#d3e3fd] pl-[15px] text-[14.6px] text-[#0b2a5b]">
            <Fit w={33}>Error</Fit>
            <Dots className="ml-[13px] h-[18px] w-[5px]" />
          </span>
        </div>
      </div>
      <div className="relative flex min-h-0 flex-1">
        <div className="flex min-h-0 flex-1 flex-col items-center">
          <div className="flex h-[82px] w-full shrink-0 items-center bg-white shadow-[0_5px_18px_rgba(0,0,0,0.22)]">
            <Fit w={66} className="ml-[27px] text-[16px] text-[#6b7280]">לא מחובר</Fit>
            <LogoTiny className="ml-auto h-[54px] w-[54px] pb-[3px] shadow-[0_1px_2px_rgba(0,0,0,0.05)]" mark="h-[9px] w-[7px]" text="text-[7.8px]" />
            <Brand w={129} className="mr-[26px] ml-[14px] text-[25px]" />
          </div>
          <div dir="rtl" className="mt-[35px] flex h-[803px] w-[432px] shrink-0 flex-col items-center rounded-[4px] bg-white px-9 pt-[45px] shadow-[0_2px_10px_rgba(0,0,0,0.10)]">
            <div dir="ltr" className="flex h-[146px] w-[146px] shrink-0 justify-center rounded-full bg-[#fdfdfb] pt-[58px]">
              <LinkMark className="h-[26px] w-[21px]" />
              <Fit w={89} className="ml-[6px] h-[26px] font-[Inter] text-[24.5px] leading-[26px] font-semibold text-[#0c2344]">BizzColl</Fit>
            </div>
            <h1 className="mt-[20px] h-[36px] text-[26px] leading-[36px] font-bold text-black"><Fit w={251}>ברוך הבא ל־BizzColl</Fit></h1>
            <div className="mt-[18px] flex h-[42px] w-[360px] shrink-0 justify-center gap-[18px] border-b border-[#d1d5db] text-[15.5px]">
              <span className="flex w-[89px] justify-center border-b-2 border-[#2563eb] pt-[8px] font-semibold text-[#2563eb]"><Fit w={52}>הרשמה</Fit></span>
              <span className="flex w-[157px] justify-center pt-[8px] text-[#6b7280]"><Fit w={121}>התחברות באימייל</Fit></span>
            </div>
            <div dir="ltr" className="mt-[18px] flex h-[47px] w-[360px] shrink-0 items-center rounded-[4px] border border-[#e5e7eb] px-[18px] text-[17.5px]"><Fit w={50}>admin</Fit></div>
            <div dir="ltr" className="mt-[18px] flex h-[47px] w-[360px] shrink-0 items-center rounded-[4px] border border-[#e0e5ee] bg-[#e8f0fe] px-[18px] text-[17.5px]"><Fit w={167}>dvirdishi@gmail.com</Fit></div>
            <div dir="ltr" className="mt-[18px] flex h-[47px] w-[360px] shrink-0 items-center gap-[2.4px] rounded-[4px] border border-[#e0e5ee] bg-[#e8f0fe] px-[18px]">
              {[0, 1, 2, 3, 4, 5].map((d) => <span key={d} className="h-[5px] w-[5px] rounded-full bg-black" />)}
            </div>
            <div className="mt-[18px] flex h-[42px] gap-[18px] text-[15.5px] text-black">
              <span className="flex w-[100px] items-center justify-center rounded-[4px] border border-[#e5e7eb] bg-[#f3f4f6]"><Fit w={62}>בעל עסק</Fit></span>
              <span className="flex w-[97px] items-center justify-center rounded-[4px] border border-[#e5e7eb] bg-[#f3f4f6]"><Fit w={59}>יוצר תוכן</Fit></span>
            </div>
            <div dir="ltr" className="mt-[18px] flex h-[42px] w-[138px] shrink-0 items-center justify-center gap-[6px] rounded-[4px] border border-[#e5e7eb] bg-[#dc2626] text-[15px] text-white">
              <Crown className="h-[15px] w-[18px]" />
              <span className="flex gap-[5px]"><Fit w={35}>אדמין</Fit><Fit w={34}>(dev)</Fit></span>
            </div>
            <div className="mt-[19px] flex h-[45px] w-[360px] shrink-0 items-center justify-center rounded-[4px] bg-[#9333ea] text-[17.5px] text-white"><Fit w={59}>הרשמה</Fit></div>
            <div dir="ltr" className="mt-[18px] flex h-[54px] w-[360px] shrink-0 items-center rounded-[4px] border border-[#d1d5db] pl-[79px] text-[15.5px] font-medium text-[#374151]">
              <span className="flex h-[32px] w-[32px] items-center justify-center rounded-full shadow-[0_1px_2px_rgba(0,0,0,0.08)]"><GoogleG className="h-[22px] w-[22px]" /></span>
              <span dir="rtl" className="ml-[27px] flex"><Fit w={148}>התחברות עם Google</Fit></span>
            </div>
          </div>
        </div>
        <div className="flex w-[19px] flex-col items-center bg-[#fbfbfb]">
          <span className="mt-[8px] border-x-[6px] border-b-[7px] border-x-transparent border-b-[#7d7d7d]" />
          <span className="mt-[8px] h-[803px] w-[11px] rounded-full bg-[#8b8b8b]" />
          <span className="mt-auto mb-[7px] border-x-[6px] border-t-[7px] border-x-transparent border-t-[#7d7d7d]" />
        </div>
        <NextBadge className="bottom-[20px] left-[22px] h-[43px] w-[43px] rounded-full shadow-[0_10px_20px_rgba(0,0,0,0.12)]" />
      </div>
      <RightTaskbar />
    </div>
  );
}

export default function App() {
  return (
    <div className="flex h-[1080px] w-[3840px] overflow-hidden font-['Open_Sans','Noto_Sans',sans-serif]">
      <LeftScreen />
      <RightScreen />
    </div>
  );
}
